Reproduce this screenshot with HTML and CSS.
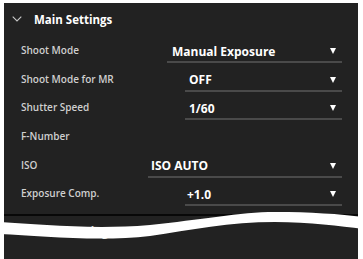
FILE: index.html
```html
<!DOCTYPE html>
<html>
<head>
<meta charset="utf-8">
<link rel="stylesheet" href="styles.css">
</head>
<body>
<div class="panel">
  <div class="section-head">
    <svg class="chev" width="10" height="6" viewBox="0 0 10 6"><path d="M0.7 0.7 L5 5 L9.3 0.7" fill="none" stroke="#c8c8c8" stroke-width="1.1"/></svg>
    <span>Main Settings</span>
  </div>
  <div class="rows">
    <div class="row">
      <span class="label">Shoot Mode</span>
      <div class="dd dd-wide"><span class="val">Manual Exposure</span><i class="caret"></i></div>
    </div>
    <div class="row">
      <span class="label">Shoot Mode for MR</span>
      <div class="dd"><span class="val">OFF</span><i class="caret"></i></div>
    </div>
    <div class="row">
      <span class="label">Shutter Speed</span>
      <div class="dd"><span class="val">1/60</span><i class="caret"></i></div>
    </div>
    <div class="row">
      <span class="label">F-Number</span>
    </div>
    <div class="row">
      <span class="label">ISO</span>
      <div class="dd dd-xwide"><span class="val">ISO AUTO</span><i class="caret"></i></div>
    </div>
    <div class="row">
      <span class="label">Exposure Comp.</span>
      <div class="dd"><span class="val val-tight">+1.0</span><i class="caret"></i></div>
    </div>
  </div>
  <div class="divider"></div>
  <div class="section-head next">
    <svg class="chev" width="10" height="6" viewBox="0 0 10 6"><path d="M0.7 0.7 L5 5 L9.3 0.7" fill="none" stroke="#c8c8c8" stroke-width="1.1"/></svg>
    <span>Drive Settings</span>
  </div>
</div>
<svg class="tear" width="363" height="50" viewBox="0 0 363 50">
  <path d="M0 22 C 40 24 90 30 150 25 C 200 20 240 12 275 12 C 310 12 340 14 363 17 L363 29 C 340 26 310 22 275 22 C 230 22 190 30 150 36 C 100 42 40 36 0 34 Z" fill="#fff"/>
</svg>
</body>
</html>
```
FILE: styles.css
```css
html, body {
  margin: 0;
  padding: 0;
  background: #fff;
  height: 259px;
  overflow: hidden;
}
body {
  position: relative;
  font-family: "Open Sans", "Noto Sans", sans-serif;
}
.panel {
  margin: 3px 5px 0 4px;
  height: 256px;
  background: #222;
  overflow: hidden;
}
.section-head {
  display: flex;
  align-items: center;
  gap: 12px;
  height: 32px;
  padding-left: 8px;
  color: #fff;
  font-weight: 700;
  font-size: 11.5px;
}
.chev {
  display: block;
  flex: none;
}
.rows {
  padding-top: 3px;
}
.row {
  display: flex;
  align-items: center;
  height: 28.6px;
}
.label {
  flex: 1;
  padding-left: 17px;
  padding-bottom: 4px;
  color: #cfcfcf;
  font-size: 10px;
  font-weight: 600;
}
.dd {
  box-sizing: border-box;
  display: flex;
  align-items: center;
  width: 157px;
  height: 22px;
  margin-right: 16px;
  padding: 0 6px 0 4px;
  border-bottom: 2px solid #4a4a4a;
}
.dd-wide { width: 175px; padding-left: 5px; }
.dd-xwide { width: 194px; padding-left: 3px; }
.val {
  flex: 1;
  color: #fff;
  font-size: 12px;
  font-weight: 700;
}
.val-tight { margin-left: -2px; }
.caret {
  width: 0;
  height: 0;
  border-left: 3.5px solid transparent;
  border-right: 3.5px solid transparent;
  border-top: 6px solid #fff;
}
.divider {
  height: 2px;
  margin-top: 4px;
  background: #080808;
}
.section-head.next {
  height: 31px;
  color: #e6e6e6;
}
.tear {
  position: absolute;
  left: 0;
  top: 200px;
  display: block;
}
```
